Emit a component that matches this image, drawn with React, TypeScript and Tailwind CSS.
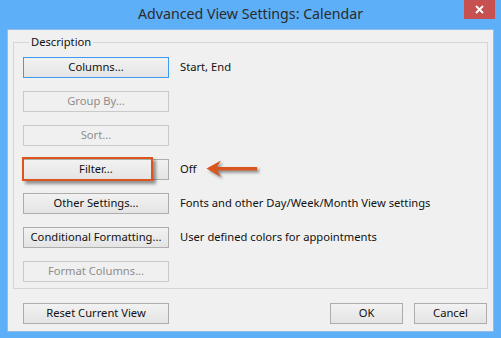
import React from "react";

const font = { fontFamily: '"Segoe UI", "Noto Sans", sans-serif' };

type BtnProps = {
    label: string;
    disabled?: boolean;
    focused?: boolean;
    width?: string;
};

function Button({ label, disabled, focused, width = "w-[146px]" }: BtnProps) {
    if (disabled) {
        return (
            <div
                className={`${width} h-[21px] shrink-0 flex items-center justify-center border border-[#cacaca] bg-[#f0f0f0] text-[11.2px] text-[#8d8d8d]`}
            >
                {label}
            </div>
        );
    }
    return (
        <div
            className={`${width} h-[21px] shrink-0 flex items-center justify-center border ${
                focused ? "border-[#3c9af0]" : "border-[#adadad]"
            } bg-gradient-to-b from-[#f2f2f2] to-[#e4e4e4] text-[11.2px] text-[#111]`}
        >
            {label}
        </div>
    );
}

function Arrow() {
    return (
        <svg width="56" height="22" viewBox="0 0 56 22" className="ml-[10px] drop-shadow-[2px_2px_1.5px_rgba(0,0,0,0.45)]">
            <path
                d="M0.5 9.5 L15 1.5 Q12 6 11.5 8 L51 8 L51 11.5 L11.5 11.5 Q12 13.5 15 18 Z"
                fill="#d9561f"
            />
        </svg>
    );
}

function Row({ children, label }: { children: React.ReactNode; label?: React.ReactNode }) {
    return (
        <div className="flex items-center h-[21px]">
            {children}
            {label && <div className="ml-[11px] text-[11.2px] text-[#111] flex items-center">{label}</div>}
        </div>
    );
}

export default function App() {
    return (
        <div className="w-[501px] h-[338px] bg-[#5daff7] flex flex-col" style={font}>
            {/* title bar */}
            <div className="relative h-[29px] flex items-center justify-center">
                <span className="text-[14.2px] text-[#2b2b2b] -mt-[2px]">Advanced View Settings: Calendar</span>
                <div className="absolute right-[6px] top-0 w-[31px] h-[19px] bg-[#c75050] flex items-center justify-center">
                    <svg width="9" height="9" viewBox="0 0 9 9">
                        <path d="M1 1 L8 8 M8 1 L1 8" stroke="white" strokeWidth="1.8" />
                    </svg>
                </div>
            </div>

            {/* client */}
            <div className="mx-[7px] mb-[6px] flex-1 bg-[#f0f0f0] border border-[#8fbde8] flex flex-col px-[5px] pt-[4px]">
                <fieldset className="border border-[#d5d5d5] px-[9px] pt-[7px] pb-[6px] m-0">
                    <legend className="ml-[6px] px-[2px] text-[11.2px] text-[#111] leading-[16px]">Description</legend>
                    <div className="flex flex-col gap-[13px]">
                        <Row label="Start, End">
                            <Button label="Columns..." focused />
                        </Row>
                        <Row>
                            <Button label="Group By..." disabled />
                        </Row>
                        <Row>
                            <Button label="Sort..." disabled />
                        </Row>
                        <Row
                            label={
                                <>
                                    <span>Off</span>
                                    <Arrow />
                                </>
                            }
                        >
                            <div className="relative">
                                <Button label="Filter..." />
                                <div className="absolute -left-[1px] -top-[2px] w-[131px] h-[24px] border-2 border-[#d9561f] shadow-[3px_3px_3px_rgba(0,0,0,0.4)]" />
                            </div>
                        </Row>
                        <Row label="Fonts and other Day/Week/Month View settings">
                            <Button label="Other Settings..." />
                        </Row>
                        <Row label="User defined colors for appointments">
                            <Button label="Conditional Formatting..." />
                        </Row>
                        <Row>
                            <Button label="Format Columns..." disabled />
                        </Row>
                    </div>
                </fieldset>

                <div className="flex items-center mt-[14px] pl-[10px] pr-[1px]">
                    <Button label="Reset Current View" />
                    <div className="flex-1" />
                    <Button label="OK" width="w-[73px]" />
                    <div className="w-[11px]" />
                    <Button label="Cancel" width="w-[73px]" />
                </div>
            </div>
        </div>
    );
}
